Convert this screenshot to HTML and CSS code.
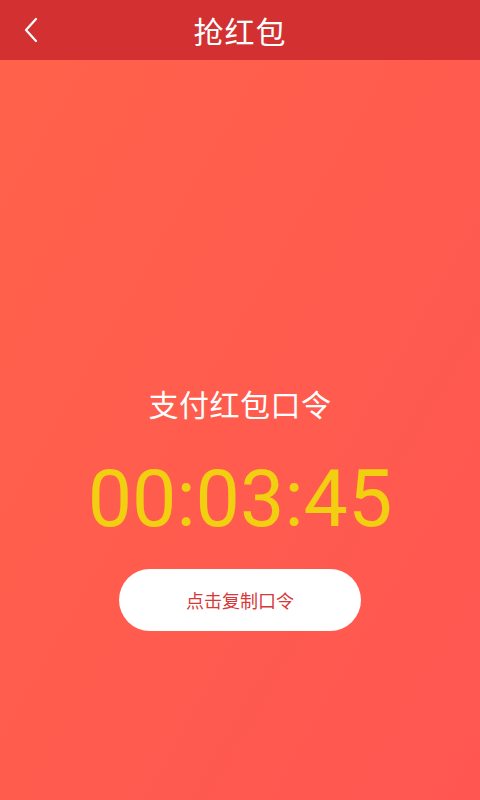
FILE: index.html
```html
<!DOCTYPE html>
<html lang="zh">
<head>
	<meta charset="UTF-8" />
	<meta name="viewport" content="width=device-width, initial-scale=1.0" />
	<title>抢红包</title>
	<link rel="stylesheet" href="styles.css">
</head>
<body>
	<div class="page">
		<div class="top">
			<a class="back" href="#">
				<svg width="16" height="26" viewBox="0 0 16 26"><path d="M13 2 L3 13 L13 24" fill="none" stroke="#fff" stroke-width="2.2" stroke-linecap="round" stroke-linejoin="round"/></svg>
			</a>
			<h1>抢红包</h1>
		</div>
		<div class="main">
			<p class="tip">支付红包口令</p>
			<p class="time">00:03:45</p>
			<a class="btn" href="#">点击复制口令</a>
		</div>
	</div>
</body>
</html>
```

FILE: styles.css
```css
*{margin: 0;padding: 0;}
html,body{height: 100%;}
body{font-family: "Noto Sans CJK SC", "Noto Sans", sans-serif;}
.page{
	height: 800px;display: flex;flex-direction: column;
	background: linear-gradient(120deg, #ff624a 0%, #ff5c4e 50%, #ff5652 100%);
}
.top{
	height: 60px;background: #d33131;
	display: flex;align-items: center;justify-content: center;
	position: relative;
}
.top h1{font-size: 30px;font-weight: normal;color: #fff;line-height: 60px;letter-spacing: 1px;}
.back{
	position: absolute;left: 23px;top: 17px;
	display: block;width: 16px;height: 26px;
}
.back svg{display: block;}
.main{
	flex: 1;display: flex;flex-direction: column;align-items: center;
	padding-top: 323px;
}
.tip{font-size: 30px;line-height: 40px;color: #fff;letter-spacing: 0.5px;}
.time{
	font-family: Roboto, "Liberation Sans", sans-serif;
	font-size: 79px;line-height: 90px;color: #f2cf10;
	margin-top: 31px;
}
.btn{
	margin-top: 25px;display: flex;align-items: center;justify-content: center;
	width: 242px;height: 62px;border-radius: 31px;background: #fff;
	color: #d83838;font-size: 18px;text-decoration: none;
}
```
